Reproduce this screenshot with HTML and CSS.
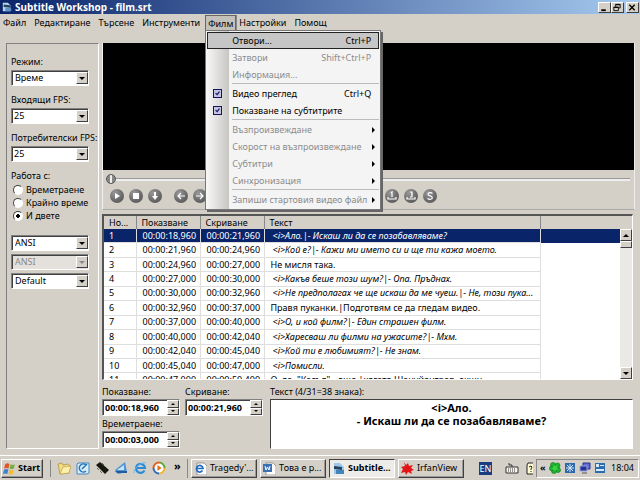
FILE: index.html
```html
<!DOCTYPE html>
<html lang="bg">
<head>
<meta charset="utf-8">
<title>Subtitle Workshop - film.srt</title>
<link rel="stylesheet" href="styles.css">
</head>
<body>
<header class="titlebar">
  <svg class="app-icon" viewBox="0 0 12 12"><path d="M1 1h6l3 3v7H1z" fill="#b9d6ee"/><path d="M2 3l8 1v3l-8-1z" fill="#27435f"/><path d="M4 7h7v4H4z" fill="#5c93c4"/></svg>
  <h1>Subtitle Workshop - film.srt</h1>
  <div class="window-buttons">
    <button aria-label="Minimize"><svg viewBox="0 0 10 10"><path d="M2 7h5v2H2z"/></svg></button>
    <button aria-label="Restore"><svg viewBox="0 0 10 10"><path d="M3.5 4V1.500h5v4H7M3.500 2h5M1.500 4.500h5v4h-5zM1.500 5h5" fill="none" stroke="#000"/></svg></button>
    <button class="close" aria-label="Close"><svg viewBox="0 0 10 10"><path d="M2 2l6 6M8 2l-6 6" fill="none" stroke="#000" stroke-width="1.500"/></svg></button>
  </div>
</header>
<nav class="menubar">
  <button>Файл</button>
  <button>Редактиране</button>
  <button>Търсене</button>
  <button>Инструменти</button>
  <div class="menu-open">
    <button class="active">Филм</button>
    <div class="dropdown">
      <button class="selected"><span>Отвори...</span><kbd>Ctrl+P</kbd></button>
      <button disabled><span>Затвори</span><kbd>Shift+Ctrl+P</kbd></button>
      <button disabled><span>Информация...</span></button>
      <hr>
      <button><i class="check"><svg viewBox="0 0 9 9"><path d="M2 4l2 2 3-4" fill="none" stroke="#15155c" stroke-width="1.500"/></svg></i><span>Видео преглед</span><kbd>Ctrl+Q</kbd></button>
      <button><i class="check"><svg viewBox="0 0 9 9"><path d="M2 4l2 2 3-4" fill="none" stroke="#15155c" stroke-width="1.500"/></svg></i><span>Показване на субтитрите</span></button>
      <hr>
      <button class="sub" disabled><span>Възпроизвеждане</span></button>
      <button class="sub" disabled><span>Скорост на възпроизвеждане</span></button>
      <button class="sub" disabled><span>Субтитри</span></button>
      <button class="sub" disabled><span>Синхронизация</span></button>
      <hr>
      <button class="sub" disabled><span>Запиши стартовия видео файл</span></button>
    </div>
  </div>
  <button>Настройки</button>
  <button>Помощ</button>
</nav>
<main class="workspace">
  <aside class="sidebar">
    <label for="mode">Режим:</label>
    <div class="combo"><select id="mode"><option>Време</option></select><b></b></div>
    <label for="fps-in">Входящи FPS:</label>
    <div class="combo tight"><select id="fps-in"><option>25</option></select><b></b></div>
    <label for="fps-out">Потребителски FPS:</label>
    <div class="combo tight"><select id="fps-out"><option>25</option></select><b></b></div>
    <fieldset>
      <legend>Работа с:</legend>
      <label><input type="radio" name="work">Времетраене</label>
      <label><input type="radio" name="work">Крайно време</label>
      <label><input type="radio" name="work" checked>И двете</label>
    </fieldset>
    <div class="charsets">
      <div class="combo"><select aria-label="Charset"><option>ANSI</option></select><b></b></div>
      <div class="combo off"><select aria-label="Charset 2" disabled><option>ANSI</option></select><b></b></div>
      <div class="combo"><select aria-label="Style"><option>Default</option></select><b></b></div>
    </div>
  </aside>
  <div class="content">
    <section class="player">
      <div class="video"></div>
      <input class="seek" type="range" min="0" max="100" value="0" aria-label="Seek">
      <div class="controls">
        <div>
          <button aria-label="Play"><svg viewBox="0 0 14 14"><path d="M5 4l5 3-5 3z" fill="#fff"/></svg></button>
          <button aria-label="Stop"><svg viewBox="0 0 14 14"><path d="M4 4h6v6H4z" fill="#fff"/></svg></button>
          <button aria-label="Scroll list"><svg viewBox="0 0 14 14"><path d="M6 3h2v4h2l-3 4-3-4h2z" fill="#fff"/></svg></button>
        </div>
        <div>
          <button aria-label="Previous subtitle"><svg viewBox="0 0 14 14"><path d="M11 7H4M7 4L4 7l3 3" /></svg></button>
          <button aria-label="Next subtitle"><svg viewBox="0 0 14 14"><path d="M3 7h7M7 4l3 3-3 3"/></svg></button>
          <button aria-label="Rewind"></button>
          <button aria-label="Forward"></button>
        </div>
        <div><button aria-label="Rate"></button><button aria-label="Move subtitle"></button><button aria-label="Set delay"></button></div>
        <div><button aria-label="Start subtitle"></button><button aria-label="End subtitle"></button><button aria-label="Set show time"></button></div>
        <div>
          <button aria-label="First sync point"><svg viewBox="0 0 14 14"><path d="M6 4l1-1v5M3 8v2h8V8"/></svg></button>
          <button aria-label="Last sync point"><svg viewBox="0 0 14 14"><path d="M6 3h2v2H7h1v3H6M3 8v2h8V8"/></svg></button>
          <button aria-label="Synchronize"><svg viewBox="0 0 14 14"><path d="M9.500 4.500C8 3 5 3.500 5 5.200 5 7.300 9.300 6.300 9.300 8.700 9.300 10.600 6 10.800 4.500 9.300"/></svg></button>
        </div>
      </div>
    </section>
    <section class="list">
      <table>
        <colgroup><col class="c-num"><col class="c-time"><col class="c-time"><col class="c-text"><col></colgroup>
        <thead><tr><th>Но...</th><th>Показване</th><th>Скриване</th><th>Текст</th><th></th></tr></thead>
        <tbody>
          <tr class="current"><td>1</td><td>00:00:18,960</td><td>00:00:21,960</td><td class="it">&lt;i&gt;Ало.|- Искаш ли да се позабавляваме?</td><td></td></tr>
          <tr><td>2</td><td>00:00:21,960</td><td>00:00:24,960</td><td class="it">&lt;i&gt;Кой е?|- Кажи ми името си и ще ти кажа моето.</td><td></td></tr>
          <tr><td>3</td><td>00:00:24,960</td><td>00:00:27,000</td><td>Не мисля така.</td><td></td></tr>
          <tr><td>4</td><td>00:00:27,000</td><td>00:00:30,000</td><td class="it">&lt;i&gt;Какъв беше този шум?|- Опа. Пръднах.</td><td></td></tr>
          <tr><td>5</td><td>00:00:30,000</td><td>00:00:32,960</td><td class="it">&lt;i&gt;Не предполагах че ще искаш да ме чуеш.|- Не, този пука...</td><td></td></tr>
          <tr><td>6</td><td>00:00:32,960</td><td>00:00:37,000</td><td>Правя пуканки.|Подготвям се да гледам видео.</td><td></td></tr>
          <tr><td>7</td><td>00:00:37,000</td><td>00:00:40,000</td><td class="it">&lt;i&gt;О, и кой филм?|- Един страшен филм.</td><td></td></tr>
          <tr><td>8</td><td>00:00:40,000</td><td>00:00:42,040</td><td class="it">&lt;i&gt;Харесваш ли филми на ужасите?|- Мхм.</td><td></td></tr>
          <tr><td>9</td><td>00:00:42,040</td><td>00:00:45,040</td><td class="it">&lt;i&gt;Кой ти е любимият?|- Не знам.</td><td></td></tr>
          <tr><td>10</td><td>00:00:45,040</td><td>00:00:47,000</td><td class="it">&lt;i&gt;Помисли.</td><td></td></tr>
          <tr><td>11</td><td>00:00:47,000</td><td>00:00:50,400</td><td>О, да. "Касъл" - още |когато Шануйентрав, екшн.</td><td></td></tr>
        </tbody>
      </table>
      <div class="scrollbar">
        <button class="up" aria-label="Scroll up"></button>
        <span class="thumb"></span>
        <button class="down" aria-label="Scroll down"></button>
      </div>
    </section>
    <section class="editor">
      <div class="times">
        <div class="time"><label for="t-show">Показване:</label><div class="spin"><input id="t-show" value="00:00:18,960"><button class="up" aria-label="Up"></button><button class="down" aria-label="Down"></button></div></div>
        <div class="time"><label for="t-hide">Скриване:</label><div class="spin"><input id="t-hide" value="00:00:21,960"><button class="up" aria-label="Up"></button><button class="down" aria-label="Down"></button></div></div>
        <div class="time"><label for="t-dur">Времетраене:</label><div class="spin"><input id="t-dur" value="00:00:03,000"><button class="up" aria-label="Up"></button><button class="down" aria-label="Down"></button></div></div>
      </div>
      <div class="text">
        <label for="sub-text">Текст (4/31=38 знака):</label>
        <textarea id="sub-text">&lt;i&gt;Ало.
- Искаш ли да се позабавляваме?</textarea>
      </div>
    </section>
  </div>
</main>
<footer class="taskbar">
  <button class="start"><svg viewBox="0 0 12 12"><path d="M2 2q2-1.500 4 0L5 6Q3 5 1 6z" fill="#e2552b"/><path d="M7 2q2 1 4 0l-1 4q-2 1-4 0z" fill="#76b043"/><path d="M1 7q2-1 4 0l-1 4Q2 10 0 11z" fill="#3f7fd0"/><path d="M6 7q2 1 4 0l-1 4q-2 1-4 0z" fill="#f2bd2e"/></svg>Start</button>
  <div class="quick">
    <a href="#" aria-label="Folder"><svg viewBox="0 0 14 14"><path d="M1 3l4-1 1 2 5-1 2 2-1 7-9 1z" fill="#f1dc84" stroke="#a48b3a" stroke-width=".7"/><path d="M3 13l3-7 8-1-2 7z" fill="#fff0a8" stroke="#b09542" stroke-width=".6"/></svg></a>
    <a href="#" aria-label="Desktop"><svg viewBox="0 0 14 14"><path d="M2 2h11v10l-2 1H1V3z" fill="#d9edf9" stroke="#4387bd"/><path d="M10 4a4 4 0 1 0 0 6M6 8l5-5" fill="none" stroke="#2374b8" stroke-width="1.500"/></svg></a>
    <a href="#" aria-label="Winamp"><svg viewBox="0 0 14 14"><path d="M1 4l4-3 9 8-4 4z" fill="#17170f"/><path d="M2 7l2 2M5 10l2 2M7 2l2 2" stroke="#6e6d4e"/></svg></a>
    <a href="#" aria-label="Scanner"><svg viewBox="0 0 14 14"><path d="M1 9l10-8 2 10-9 2z" fill="#4f94d6"/><path d="M3 9l7-5v5z" fill="#c9e4f6"/><path d="M1 10h12v2H3z" fill="#275b9c"/></svg></a>
    <a href="#" aria-label="Internet Explorer"><svg viewBox="0 0 14 14"><path d="M11.500 9.500A4.500 4.500 0 1 1 12 7H4" fill="none" stroke="#2a8bd8" stroke-width="2.200"/><path d="M1 12C0 8 9 0 13 2" fill="none" stroke="#67b9ea"/></svg></a>
    <a href="#" aria-label="Media Player"><svg viewBox="0 0 14 14"><circle cx="7" cy="7" r="5.500" fill="#fff"/><path d="M7 1.500A5.500 5.500 0 0 0 1.500 7" stroke="#e45f22" stroke-width="2" fill="none"/><path d="M7 1.500A5.500 5.500 0 0 1 12.500 7" stroke="#63a83a" stroke-width="2" fill="none"/><path d="M12.500 7A5.500 5.500 0 0 1 7 12.500" stroke="#f3b52a" stroke-width="2" fill="none"/><path d="M7 12.500A5.500 5.500 0 0 1 1.500 7" stroke="#3169b5" stroke-width="2" fill="none"/><path d="M5.500 4l4 3-4 3z" fill="#e06a17"/></svg></a>
  </div>
  <span class="more">»</span>
  <div class="tasks">
    <button><svg viewBox="0 0 13 13"><path d="M3 1h7l3 3v9H3z" fill="#fff" stroke="#777" stroke-width=".7"/><path d="M8.500 8.500A3.300 3.300 0 1 1 9 6.500H3" fill="none" stroke="#226bc5" stroke-width="1.700"/></svg>Tragedy'...</button>
    <button><svg viewBox="0 0 13 13"><path d="M3 1h7l3 3v9H3z" fill="#fff" stroke="#777" stroke-width=".7"/><path d="M0 2h9v8H0z" fill="#3b70b7"/><path d="M2 4l1 4 1.500-3L6 8l1-4" fill="none" stroke="#fff"/></svg>Това е р...</button>
    <button class="pressed"><svg viewBox="0 0 13 13"><path d="M2 1h6l4 4v7H2z" fill="#9bc8e8"/><path d="M2 4l8 1v3L2 7z" fill="#27435f"/><path d="M4 8h8v4H4z" fill="#4384ba"/></svg>Subtitle...</button>
    <button><svg viewBox="0 0 13 13"><path d="M3 0l2 3 2-2 1 3 4-1-2 3 3 2-3 1 1 3-4-2-2 3-1-3-4 1 2-4-2-2 4-1z" fill="#e11515"/></svg>IrfanView</button>
  </div>
  <span class="lang">EN</span>
  <svg class="kbd-icon" viewBox="0 0 14 12"><path d="M1 5h12v6H1z" fill="#f7f5ee" stroke="#333"/><path d="M3 7h8M3 9h8" stroke="#333" stroke-dasharray="1 1"/><path d="M7 5V3H4V1" fill="none" stroke="#333"/></svg>
  <svg class="help-icon" viewBox="0 0 7 13"><path d="M7 1H2L1 3v9h6" fill="#fffbd2" stroke="#222"/><path d="M3 5l2-1 1 1-1 2v1M5 9v1" fill="none" stroke="#222"/></svg>
  <div class="tray">
    <span class="arrows">«</span>
    <svg viewBox="0 0 12 12"><g fill="#20b531" stroke="#08761a" stroke-width=".6"><circle cx="4" cy="3" r="2.500"/><circle cx="8.500" cy="3.500" r="2.500"/><circle cx="9" cy="8" r="2.500"/><circle cx="5" cy="9" r="2.500"/><circle cx="2.700" cy="6.500" r="2.300"/></g><circle cx="6" cy="6" r="2.500" fill="#37d24a"/></svg>
    <svg viewBox="0 0 12 12"><path d="M1 1h10v10H1z" fill="#2f69aa"/><path d="M3 3l6 6M9 3L3 9M6 2v8M2 6h8" stroke="#cde5f7"/></svg>
    <svg viewBox="0 0 12 12"><path d="M4 1h7v6H4z" fill="#5f70d0" stroke="#283187"/><path d="M1 4h7v5H1z" fill="#24339a" stroke="#98a2dd"/><path d="M3 11h5" stroke="#555"/></svg>
    <svg viewBox="0 0 12 12"><path d="M1 1h10v10H1z" fill="#2e6cb0"/><path d="M2 2h3v3H2zM6 3h4v1H6zM2 7h8v2H2z" fill="#d7eafa"/></svg>
    <time>18:04</time>
  </div>
</footer>
</body>
</html>
```
FILE: styles.css
```css
* { box-sizing: border-box; }
:root {
  --face: #d4d0c8;
  --shade: #808080;
  --dark: #404040;
  --navy: #0a246a;
}
body {
  margin: 0;
  min-height: 100vh;
  display: flex;
  flex-direction: column;
  background: var(--face);
  color: #000;
  font: 9px/12px "Noto Sans", "Liberation Sans", sans-serif;
}
button, input, select, textarea, kbd { font: inherit; color: inherit; }
button { margin: 0; padding: 0; border: 0; background: none; }
svg { display: block; }

.titlebar {
  height: 14px;
  display: flex;
  align-items: center;
  gap: 3px;
  padding: 0 1px 0 2px;
  background: linear-gradient(90deg, #0a246a, #a6caf0);
}
.app-icon { width: 10px; height: 12px; }
.titlebar h1 { flex: 1; margin: 0; font-size: 10px; line-height: 14px; color: #fff; }
.window-buttons { display: flex; }
.window-buttons button {
  width: 13px;
  height: 11px;
  background: var(--face);
  border: 1px solid;
  border-color: #fff var(--dark) var(--dark) #fff;
}
.window-buttons .close { margin-left: 2px; }
.window-buttons svg { width: 10px; height: 9px; }

.menubar { height: 17px; display: flex; align-items: stretch; padding-top: 1px; }
.menubar > button, .menu-open > button { height: 16px; padding: 0 5px 0 3px; }
.menu-open { position: relative; }
.menu-open > .active {
  padding: 0 2px;
  background: #c4c1bb;
  border: 1px solid #666;
  border-bottom: 0;
  box-shadow: 1px 0 #888;
}
.dropdown {
  position: absolute;
  z-index: 5;
  top: 15px;
  left: 0;
  width: 176px;
  padding: 1px;
  border: 1px solid #777;
  box-shadow: 2px 2px 0 #666;
  background: linear-gradient(90deg, #f8f8f8, #c8c6c2 23px, #f4f4f4 23px);
}
.dropdown button {
  width: 100%;
  height: 17px;
  display: flex;
  align-items: center;
  padding: 0 8px 0 25px;
  position: relative;
}
.dropdown button span { flex: 1; text-align: left; white-space: nowrap; }
.dropdown button:disabled { color: #8c8c8c; }
.dropdown .selected { background: #c6c6c6; box-shadow: inset 0 0 0 1px #222; }
.dropdown hr { height: 1px; margin: 0 0 1px 25px; border: 0; background: #bbb; }
.check {
  position: absolute;
  left: 6px;
  top: 4px;
  width: 9px;
  height: 9px;
  border: 1px solid #15155c;
  background: #c3c3e2;
}
.sub::after {
  content: "";
  border: 3px solid transparent;
  border-left-color: #000;
  border-right: 0;
  margin-right: -4px;
}

.workspace { flex: 1; display: flex; gap: 3px; padding: 12px 5px 6px 6px; }
.sidebar {
  width: 93px;
  border: 1px solid;
  border-color: var(--shade) #fff #fff var(--shade);
  padding: 12px 0 0 4px;
  white-space: nowrap;
}
.sidebar > label { display: block; height: 12px; }
.combo {
  width: 78px;
  height: 16px;
  margin: 2px 0 8px;
  display: flex;
  background: #fff;
  border: 1px solid;
  border-color: var(--shade) #fff #fff var(--shade);
  box-shadow: inset 1px 1px var(--dark);
}
.combo select {
  flex: 1;
  min-width: 0;
  appearance: none;
  border: 0;
  background: none;
  padding: 0 3px;
}
.combo.tight select { padding: 0 2px; }
.combo b {
  width: 12px;
  margin: 1px 0;
  display: grid;
  place-items: center;
  background: var(--face);
  border: 1px solid;
  border-color: #fff var(--dark) var(--dark) #fff;
}
.combo b::before, .scrollbar .down::before {
  content: "";
  border: 3px solid transparent;
  border-top-color: #000;
  border-bottom: 0;
}
.combo.off { color: #888; background: #e4e1dc; }
.combo.off b::before { border-top-color: #888; }
.combo.off select { opacity: 1; color: #888; }
.sidebar fieldset { margin: 0; padding: 0; border: 0; }
.sidebar legend { padding: 0; margin-bottom: 1px; }
.sidebar fieldset label { display: flex; align-items: center; gap: 3px; height: 13px; }
.sidebar input {
  appearance: none;
  width: 10px;
  height: 10px;
  margin: 0;
  margin-left: 2px;
  border: 1px solid;
  border-color: var(--dark) #fff #fff var(--dark);
  border-radius: 50%;
  background: #fff;
}
.sidebar input:checked { background: radial-gradient(circle, #000 2px, #fff 2px); }
.charsets { margin-top: 13px; }
.charsets .combo { margin: 0 0 3px; }

.content { flex: 1; min-width: 0; display: flex; flex-direction: column; }
.player {
  border: solid;
  border-width: 0 1px 1px;
  border-color: #fff #eee #aaa;
  margin-bottom: 4px;
}
.video { height: 127px; background: #000; }
.seek {
  appearance: none;
  display: block;
  width: calc(100% - 7px);
  height: 10px;
  margin: 4px 4px 5px 3px;
  background: linear-gradient(#999, #999) 0 4px / 100% 1px no-repeat, linear-gradient(#eee, #eee) 0 5px / 100% 2px no-repeat;
}
.seek::-webkit-slider-thumb {
  appearance: none;
  width: 10px;
  height: 10px;
  border-radius: 50%;
  border: 1px solid #555;
  background: linear-gradient(90deg, #888 3px, #eee 3px, #eee 5px, #888 5px);
}
.controls { display: flex; gap: 12px; padding: 0 7px 6px; height: 20px; }
.controls div { display: flex; gap: 5px; }
.controls button {
  width: 14px;
  height: 14px;
  border-radius: 50%;
  background: radial-gradient(circle at 5px 4px, #999, #666 60%, #555);
}
.controls path { fill: none; stroke: #fff; stroke-width: 1.2px; }
.controls path[fill] { fill: #fff; stroke: none; }

.list {
  position: relative;
  height: 166px;
  margin-right: 2px;
  overflow: hidden;
  background: #fff;
  border: solid;
  border-width: 2px 1px 1px 2px;
  border-color: #555 #fff #fff #555;
}
.list table { width: 100%; height: 172px; border-collapse: collapse; table-layout: fixed; }
.c-num { width: 32px; }
.c-time { width: 64px; }
.c-text { width: 276px; }
.list th {
  height: 13px;
  padding: 0 0 0 5px;
  text-align: left;
  font-weight: normal;
  line-height: 12px;
  background: var(--face);
  border-right: 1px solid #888;
}
.list td {
  padding: 0 0 0 6px;
  line-height: 12px;
  white-space: nowrap;
  overflow: hidden;
  border: solid #dedede;
  border-width: 0 1px 1px 0;
}
.list td:first-child { padding-left: 5px; }
.list td.it { font-style: italic; padding-left: 8px; }
.list th:last-child { border-right: 0; }
.list td:last-child { border: 0; }
.list .current td { background: var(--navy); color: #fff; }
.scrollbar {
  position: absolute;
  top: 13px;
  right: 0;
  bottom: 0;
  width: 12px;
  display: flex;
  flex-direction: column;
  background: #ebe9e5;
}
.scrollbar button, .thumb {
  height: 12px;
  display: grid;
  place-items: center;
  background: var(--face);
  border: 1px solid;
  border-color: #fff var(--dark) var(--dark) #fff;
}
.thumb { height: 7px; }
.scrollbar .down { margin-top: auto; }
.scrollbar .up::before {
  content: "";
  border: 3px solid transparent;
  border-bottom-color: #000;
  border-top: 0;
}

.editor { flex: 1; display: flex; gap: 6px; padding: 6px 2px 0 0; }
.times { width: 162px; display: grid; grid-template-columns: 78px 78px; column-gap: 5px; align-content: start; row-gap: 2px; }
.time label, .text label { display: block; height: 13px; }
.spin {
  height: 17px;
  display: grid;
  grid-template-columns: 1fr 12px;
  grid-template-rows: 1fr 1fr;
  background: #fff;
  border: 1px solid;
  border-color: var(--shade) #fff #fff var(--shade);
  box-shadow: inset 1px 1px var(--dark);
}
.spin input {
  grid-row: 1 / 3;
  min-width: 0;
  border: 0;
  padding: 0 0 0 2px;
  background: none;
  font-weight: bold;
}
.spin button {
  display: grid;
  place-items: center;
  background: var(--face);
  border: 1px solid;
  border-color: #fff var(--dark) var(--dark) #fff;
}
.spin button::before { content: ""; border: 2px solid transparent; }
.spin .up::before { border-bottom-color: #000; border-top: 0; }
.spin .down::before { border-top-color: #000; border-bottom: 0; }
.text { flex: 1; display: flex; flex-direction: column; }
.text textarea {
  flex: 1;
  min-height: 36px;
  resize: none;
  margin: 0;
  padding: 1px 2px;
  border: 1px solid;
  border-color: var(--dark) #fff #fff var(--dark);
  background: #fff;
  font-size: 11px;
  line-height: 13px;
  font-weight: bold;
  text-align: center;
  overflow: hidden;
}

.taskbar {
  height: 25px;
  display: flex;
  align-items: center;
  padding: 0 1px;
  border-top: 1px solid #fff;
  white-space: nowrap;
}
.start, .tasks button {
  height: 19px;
  display: flex;
  align-items: center;
  border: 1px solid;
  border-color: #fff var(--dark) var(--dark) #fff;
  box-shadow: inset -1px -1px #999;
}
.start { width: 42px; gap: 2px; padding-left: 1px; font-weight: bold; }
.start svg { width: 13px; height: 13px; }
.quick {
  display: flex;
  gap: 5px;
  align-items: center;
  height: 17px;
  margin-left: 7px;
  padding-left: 6px;
  border-left: 1px solid #888;
}
.quick svg { width: 14px; height: 14px; }
.more { width: 13px; margin-left: 8px; padding-bottom: 4px; font-weight: bold; font-size: 11px; }
.tasks { display: flex; gap: 3px; padding-left: 3px; border-left: 1px solid #888; }
.tasks button { width: 66px; padding-left: 2px; gap: 3px; }
.tasks svg { width: 13px; height: 13px; }
.tasks .pressed {
  font-weight: bold;
  background: #eeece8;
  border-color: var(--dark) #fff #fff var(--dark);
  box-shadow: none;
}
.lang {
  margin: 0 13px 0 15px;
  width: 13px;
  line-height: 13px;
  background: #1a3c80;
  color: #fff;
  text-align: center;
}
.kbd-icon { width: 14px; height: 12px; }
.help-icon { width: 7px; height: 13px; margin-left: 7px; }
.tray {
  flex: 1;
  height: 19px;
  margin-left: 3px;
  display: flex;
  align-items: center;
  gap: 3px;
  padding: 0 4px 0 3px;
  border: 1px solid;
  border-color: #888 #fff #fff #888;
}
.tray svg { width: 12px; height: 12px; }
.arrows { font-weight: bold; }
.tray time { margin-left: auto; }
```
